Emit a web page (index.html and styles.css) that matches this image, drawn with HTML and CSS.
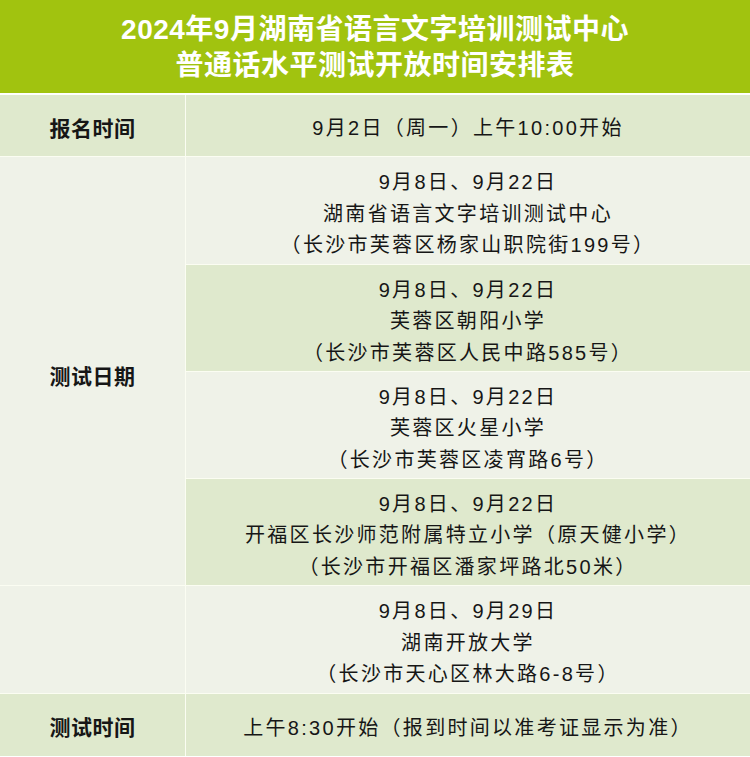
FILE: index.html
```html
<!DOCTYPE html>
<html lang="zh">
<head>
<meta charset="utf-8">
<title>2024年9月普通话水平测试开放时间安排表</title>
<link rel="stylesheet" href="styles.css">
</head>
<body>
<div class="page">
  <header class="title">
    <div class="title-line">2024年9月湖南省语言文字培训测试中心</div>
    <div class="title-line">普通话水平测试开放时间安排表</div>
  </header>
  <div class="table">
    <div class="cell label dark r-first">报名时间</div>
    <div class="cell value dark r-first">9月2日（周一）上午10:00开始</div>

    <div class="cell label light span4">测试日期</div>
    <div class="cell value light block">
      <div>9月8日、9月22日</div>
      <div>湖南省语言文字培训测试中心</div>
      <div>（长沙市芙蓉区杨家山职院街199号）</div>
    </div>
    <div class="cell value dark block">
      <div>9月8日、9月22日</div>
      <div>芙蓉区朝阳小学</div>
      <div>（长沙市芙蓉区人民中路585号）</div>
    </div>
    <div class="cell value light block">
      <div>9月8日、9月22日</div>
      <div>芙蓉区火星小学</div>
      <div>（长沙市芙蓉区凌宵路6号）</div>
    </div>
    <div class="cell value dark block">
      <div>9月8日、9月22日</div>
      <div>开福区长沙师范附属特立小学（原天健小学）</div>
      <div>（长沙市开福区潘家坪路北50米）</div>
    </div>

    <div class="cell label light"></div>
    <div class="cell value light block">
      <div>9月8日、9月29日</div>
      <div>湖南开放大学</div>
      <div>（长沙市天心区林大路6-8号）</div>
    </div>

    <div class="cell label dark r-last">测试时间</div>
    <div class="cell value dark r-last">上午8:30开始（报到时间以准考证显示为准）</div>
  </div>
</div>
</body>
</html>
```

FILE: styles.css
```css
html, body {
  margin: 0;
  padding: 0;
  background: #ffffff;
}

.page {
  width: 750px;
  height: 757px;
  overflow: hidden;
  font-family: "Liberation Sans", "Noto Sans CJK SC", sans-serif;
  color: #161616;
}

.title {
  height: 93px;
  box-sizing: border-box;
  padding-top: 12px;
  background: #a1c30f;
  color: #ffffff;
  text-align: center;
  font-weight: bold;
  font-size: 28px;
  line-height: 36px;
  letter-spacing: 0.5px;
}

.table {
  margin-top: 2px;
  display: grid;
  grid-template-columns: 185px 1fr;
  grid-template-rows: 61px 107px 106px 106px 106px 107px 62px;
  gap: 1px;
  background: #fbfdf2;
}

.cell {
  display: flex;
  align-items: center;
  justify-content: center;
  text-align: center;
}

.dark {
  background: #dfe9cd;
}

.light {
  background: #eff2e8;
}

.label {
  font-weight: bold;
  font-size: 21px;
  letter-spacing: 0.5px;
}

.value {
  font-size: 20px;
  letter-spacing: 2.3px;
}

.block {
  flex-direction: column;
  line-height: 31.5px;
  padding-top: 8px;
  box-sizing: border-box;
}

.r-first,
.r-last {
  padding-top: 2px;
  box-sizing: border-box;
}

.span4 {
  grid-row: span 4;
  padding-top: 8px;
  box-sizing: border-box;
}
```
